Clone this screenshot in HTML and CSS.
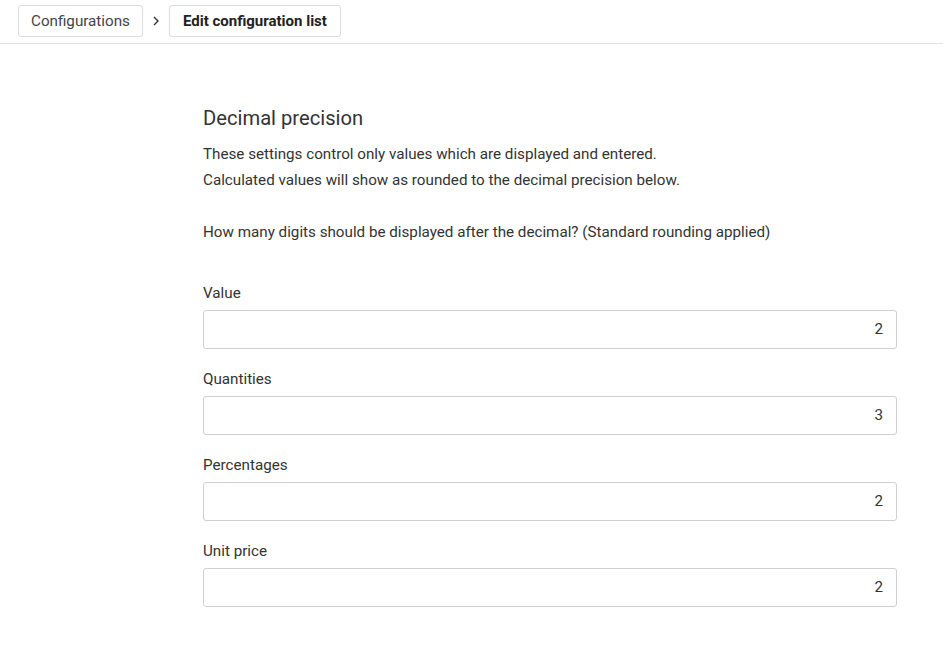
FILE: index.html
```html
<!DOCTYPE html>
<html>
<head>
<meta charset="utf-8">
<link rel="stylesheet" href="styles.css">
</head>
<body>
<header class="topbar">
  <button class="crumb">Configurations</button>
  <span class="sep"><svg width="10" height="12" viewBox="0 0 10 12"><path d="M3 2 L7 6 L3 10" fill="none" stroke="#333" stroke-width="1.4"/></svg></span>
  <button class="crumb current">Edit configuration list</button>
</header>
<main class="content">
  <h1 class="title">Decimal precision</h1>
  <p class="desc">These settings control only values which are displayed and entered.</p>
  <p class="desc">Calculated values will show as rounded to the decimal precision below.</p>
  <p class="question">How many digits should be displayed after the decimal? (Standard rounding applied)</p>
  <div class="fields">
    <label class="field"><span class="label">Value</span><input class="input" value="2"></label>
    <label class="field"><span class="label">Quantities</span><input class="input" value="3"></label>
    <label class="field"><span class="label">Percentages</span><input class="input" value="2"></label>
    <label class="field"><span class="label">Unit price</span><input class="input" value="2"></label>
  </div>
</main>
</body>
</html>
```
FILE: styles.css
```css
html, body { margin: 0; padding: 0; background: #fff; }
body { font-family: Roboto, "Noto Sans", sans-serif; color: #333; }
.topbar {
  height: 44px;
  border-bottom: 1px solid #e2e2e2;
  display: flex;
  align-items: flex-start;
  padding: 5px 0 0 18px;
  box-sizing: border-box;
  width: 943px;
}
.crumb {
  font-family: Roboto, sans-serif;
  font-size: 15.2px;
  color: #444;
  background: #fff;
  border: 1px solid #dcdcdc;
  border-radius: 3px;
  height: 32px;
  padding: 0 12px;
  cursor: pointer;
}
.crumb.current { font-weight: 700; color: #222; font-size: 15px; padding: 0 13px; }
.sep { width: 26px; height: 32px; display: flex; align-items: center; justify-content: center; }
.content { margin-left: 203px; width: 694px; padding-top: 62px; }
.title { font-size: 20.2px; font-weight: 400; margin: 0 0 11px; line-height: 24px; color: #333; }
.desc { font-size: 15.2px; margin: 0; line-height: 26px; color: #333; }
.question { font-size: 15.2px; margin: 26px 0 0; line-height: 26px; color: #333; }
.fields { margin-top: 38px; display: flex; flex-direction: column; gap: 20px; }
.field { display: flex; flex-direction: column; }
.label { font-size: 15.2px; line-height: 20px; margin-bottom: 7px; color: #333; }
.input {
  height: 39px;
  box-sizing: border-box;
  border: 1px solid #d0d0d0;
  border-radius: 3px;
  text-align: right;
  padding: 0 13px 1px;
  font-family: Roboto, sans-serif;
  font-size: 15.2px;
  color: #333;
  outline: none;
}
```
